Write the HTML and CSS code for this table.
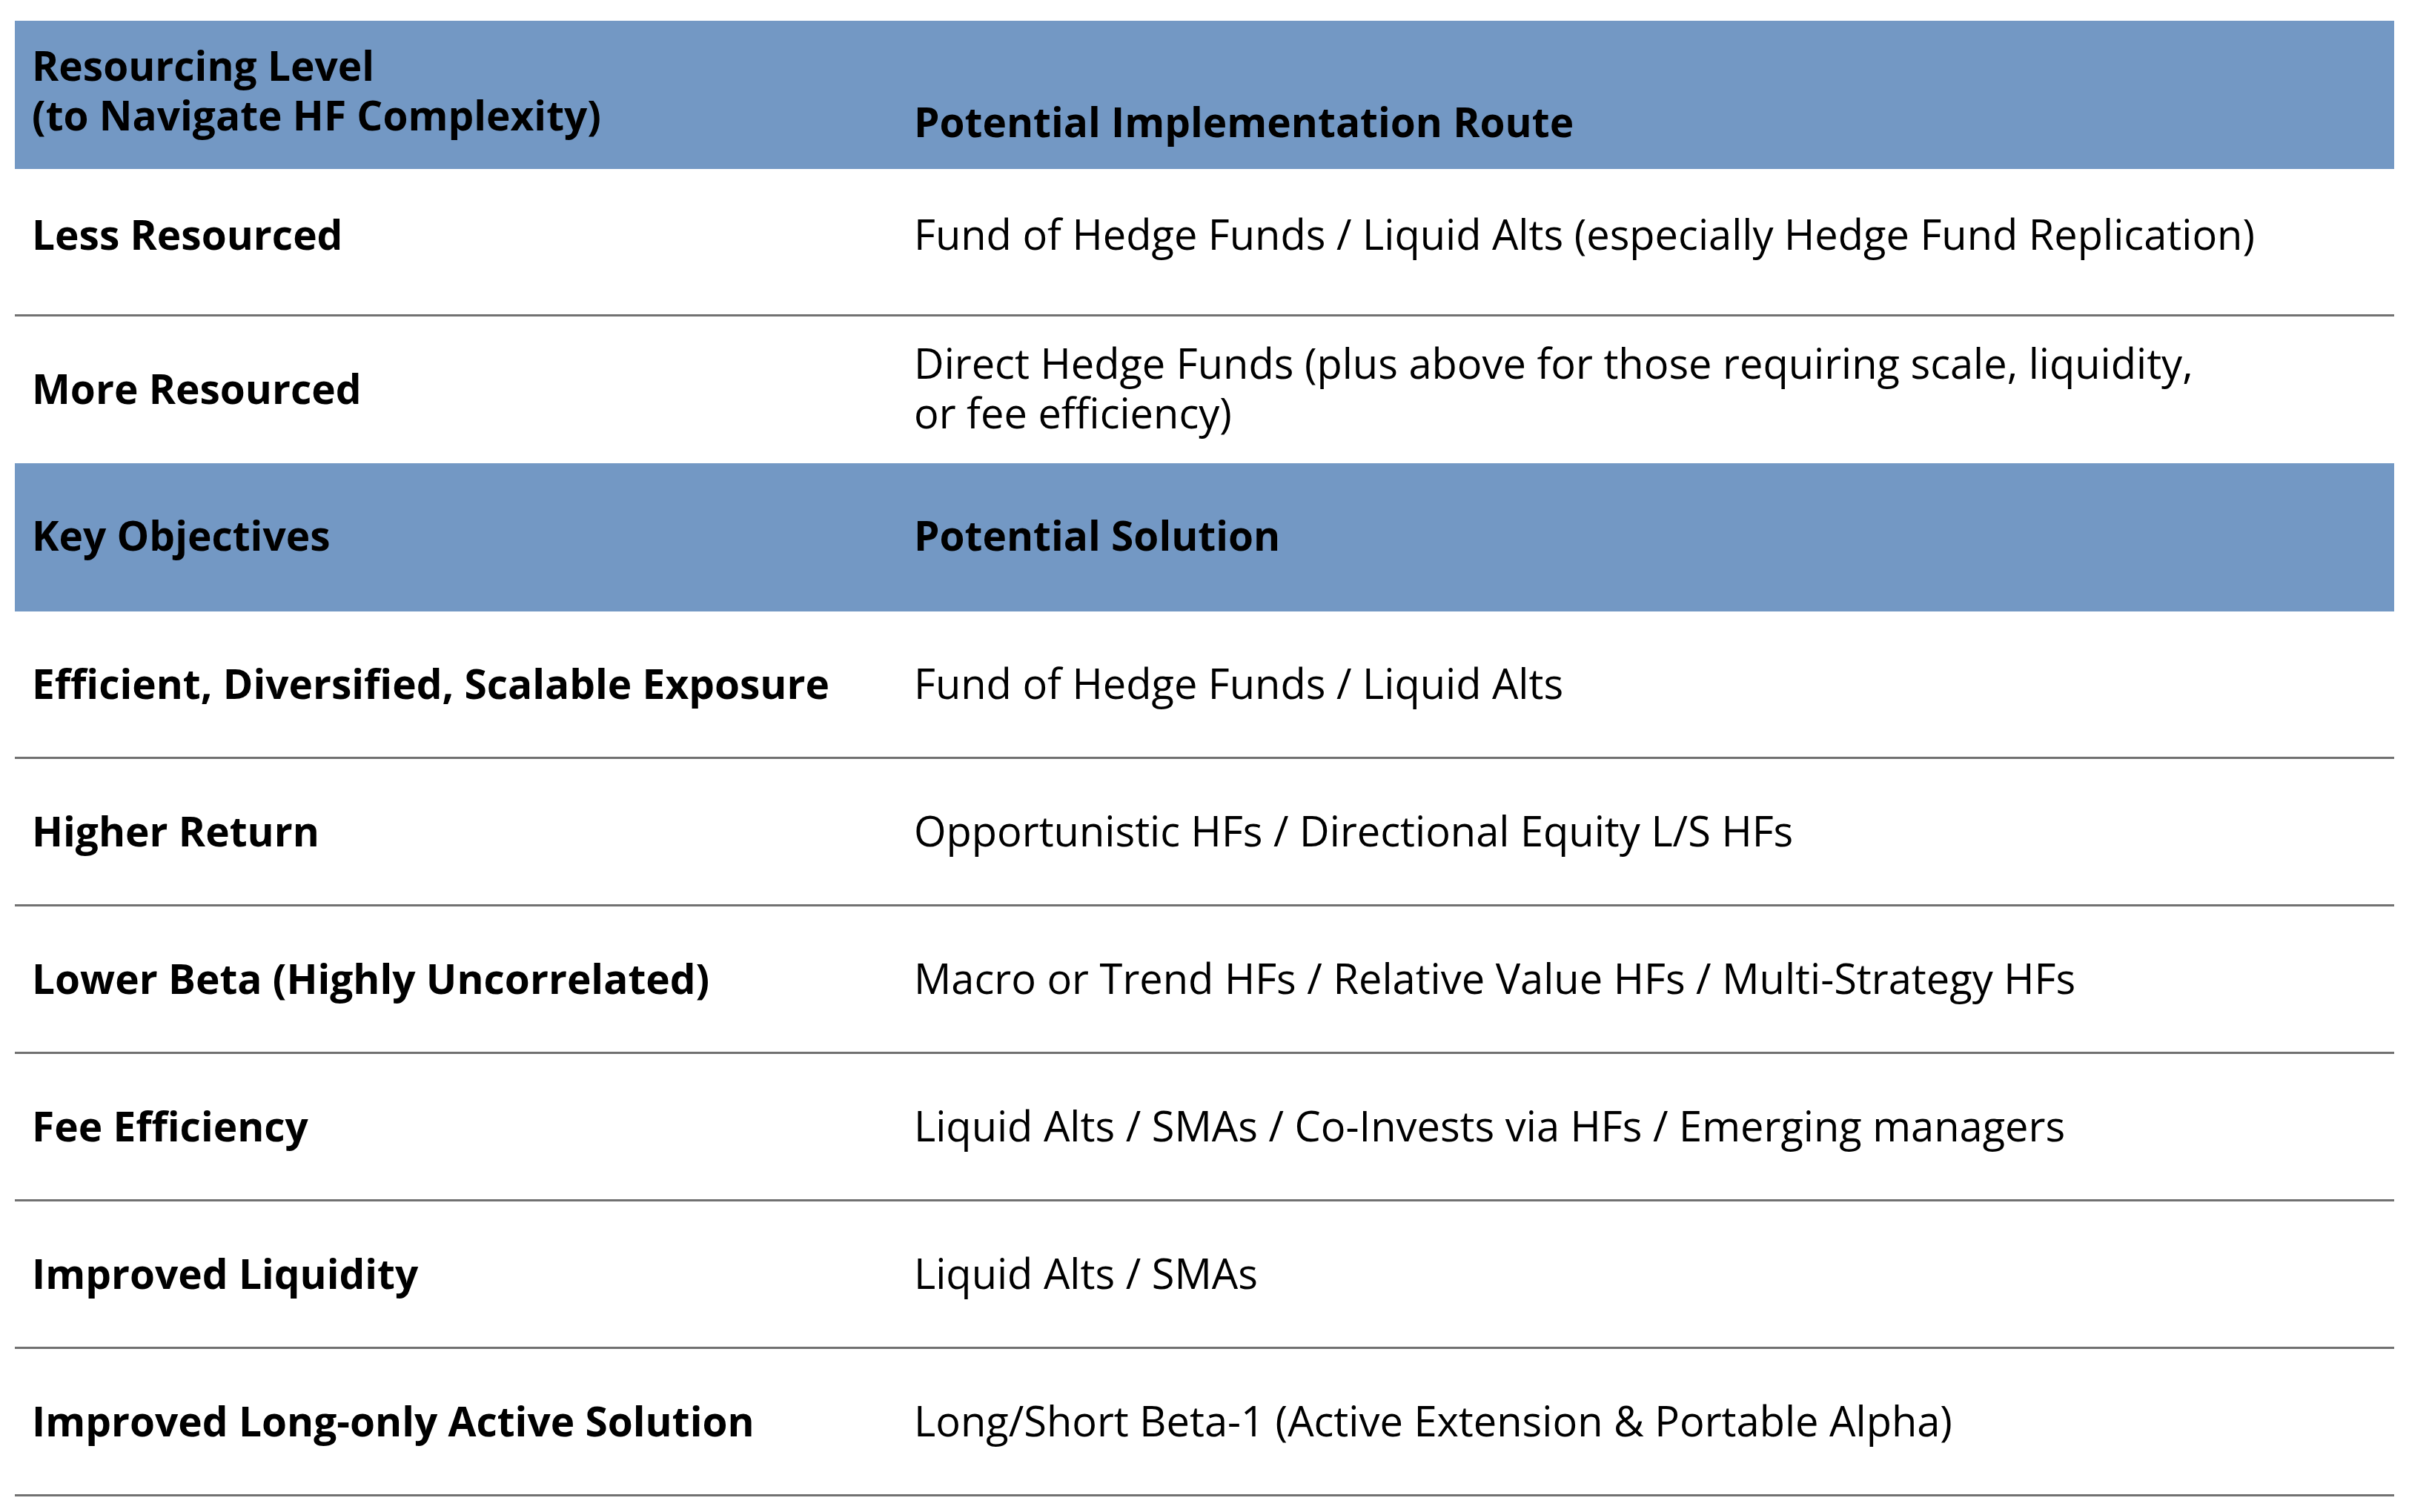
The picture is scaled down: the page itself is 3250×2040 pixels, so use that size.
FILE: index.html
```html
<!DOCTYPE html>
<html lang="en">
<head>
<meta charset="utf-8">
<title>Hedge Fund Implementation Routes</title>
<link rel="stylesheet" href="styles.css">
</head>
<body>
<div class="tbl">
  <div class="row head head-top">
    <div class="cell cell-res"><span class="ln">Resourcing Level</span><span class="ln">(to Navigate HF Complexity)</span></div>
    <div class="cell cell-route">Potential Implementation Route</div>
  </div>
  <div class="row row-less">
    <div class="cell label">Less Resourced</div>
    <div class="cell">Fund of Hedge Funds / Liquid Alts (especially Hedge Fund Replication)</div>
  </div>
  <div class="row row-more">
    <div class="cell label cell-more">More Resourced</div>
    <div class="cell cell-direct"><span class="ln">Direct Hedge Funds (plus above for those requiring scale, liquidity,</span><span class="ln">or fee efficiency)</span></div>
  </div>
  <div class="row head head-mid">
    <div class="cell">Key Objectives</div>
    <div class="cell">Potential Solution</div>
  </div>
  <div class="row">
    <div class="cell label">Efficient, Diversified, Scalable Exposure</div>
    <div class="cell">Fund of Hedge Funds / Liquid Alts</div>
  </div>
  <div class="row">
    <div class="cell label">Higher Return</div>
    <div class="cell">Opportunistic HFs / Directional Equity L/S HFs</div>
  </div>
  <div class="row">
    <div class="cell label">Lower Beta (Highly Uncorrelated)</div>
    <div class="cell">Macro or Trend HFs / Relative Value HFs / Multi-Strategy HFs</div>
  </div>
  <div class="row">
    <div class="cell label">Fee Efficiency</div>
    <div class="cell">Liquid Alts / SMAs / Co-Invests via HFs / Emerging managers</div>
  </div>
  <div class="row">
    <div class="cell label">Improved Liquidity</div>
    <div class="cell">Liquid Alts / SMAs</div>
  </div>
  <div class="row">
    <div class="cell label">Improved Long-only Active Solution</div>
    <div class="cell">Long/Short Beta-1 (Active Extension &amp; Portable Alpha)</div>
  </div>
</div>
</body>
</html>
```
FILE: styles.css
```css
html, body {
  margin: 0;
  padding: 0;
  background: #ffffff;
}

body {
  padding: 28px 20px 0 20px;
  font-family: "Open Sans", "Noto Sans", sans-serif;
  font-size: 56px;
  line-height: 67px;
  color: #000000;
}

.tbl {
  display: flex;
  flex-direction: column;
}

.row {
  display: grid;
  grid-template-columns: 1190px 1fr;
  align-items: center;
  box-sizing: border-box;
  height: 199px;
  padding-bottom: 4px;
  border-bottom: 3px solid #717171;
}

.cell {
  padding-left: 23px;
  white-space: nowrap;
}

.ln {
  display: block;
  height: 67px;
}

.label {
  font-weight: 700;
  font-size: 55px;
}

.head {
  height: 200px;
  background: #7398c4;
  border-bottom: none;
  font-weight: 700;
  font-size: 55px;
}

.head-mid {
  padding-bottom: 8px;
}

.head-top {
  align-items: end;
  padding-bottom: 0;
}

.cell-res {
  padding-bottom: 40px;
}

.cell-route {
  padding-bottom: 31px;
}

.row-less {
  height: 199px;
  padding-bottom: 22px;
}

.row-more {
  height: 198px;
  padding-bottom: 0;
  border-bottom: none;
}

.cell-more {
  padding-bottom: 6px;
}

.cell-direct {
  padding-bottom: 7px;
}
```
